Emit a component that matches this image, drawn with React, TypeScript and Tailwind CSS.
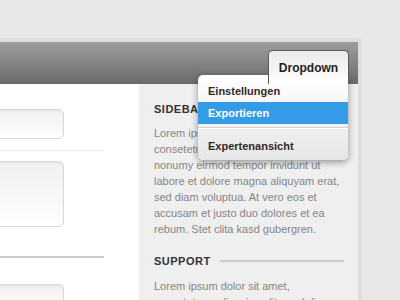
export default function App() {
  const lorem =
    "Lorem ipsum dolor sit amet, consetetur sadipscing elitr, sed diam nonumy eirmod tempor invidunt ut labore et dolore magna aliquyam erat, sed diam voluptua. At vero eos et accusam et justo duo dolores et ea rebum. Stet clita kasd gubergren."

  const inputCls =
    "-ml-3 mr-[40px] shrink-0 rounded-[5px] border border-[#d9d9d9] bg-gradient-to-b from-[#f0f0f0] to-white shadow-[inset_0_1px_2px_rgba(0,0,0,0.05)]"

  return (
    <div className="h-[300px] w-[400px] overflow-hidden bg-[#e8e8e8] pt-[38px] font-['Liberation_Sans',Arial,sans-serif]">
      <div className="w-[362px] rounded-tr-[4px] bg-[#dedede] pr-[4px] pt-[4px]">
        {/* header */}
        <div className="relative flex h-[42px] items-end justify-end bg-gradient-to-b from-[#9d9d9d] to-[#6b6b6b] pr-[9px]">
          <div className="relative z-20 flex h-[34px] w-[81px] justify-center rounded-t-[5px] border border-b-0 border-[#5a5a5a] bg-gradient-to-b from-[#eaeaea] to-white pt-[8px] text-[12px] font-bold text-[#222]">
            Dropdown
          </div>

          {/* menu */}
          <div className="absolute right-[10px] top-[33px] z-10 w-[150px] overflow-hidden rounded-[5px] bg-gradient-to-b from-white to-[#e6e6e6] pt-[6px] pb-[5px] text-[11px] font-bold shadow-[0_2px_7px_rgba(0,0,0,0.4)]">
            <div className="px-[10px] leading-[20px] text-[#332a25]">Einstellungen</div>
            <div className="mt-[1px] bg-[#349be6] px-[10px] leading-[22px] text-white">Exportieren</div>
            <div className="mt-[3px] h-[2px] border-t border-[#d2d2d2] bg-white" />
            <div className="mt-[8px] px-[10px] leading-[18px] text-[#332a25]">Expertenansicht</div>
          </div>
        </div>

        {/* body */}
        <div className="flex">
          <div className="flex h-[220px] w-[139px] shrink-0 flex-col overflow-hidden bg-white pr-[35px] pt-[25px]">
            <div className={`${inputCls} h-[30px]`} />
            <div className="mt-[11px] h-px shrink-0 bg-[#ebebeb]" />
            <div className={`${inputCls} mt-[10px] h-[66px]`} />
            <div className="mt-[29px] h-[2px] shrink-0 bg-[#cbcbcb]" />
            <div className={`${inputCls} mt-[26px] h-[30px]`} />
          </div>

          <div className="h-[220px] flex-1 overflow-hidden bg-[#efefef] pl-[15px] pr-[14px] pt-[18px]">
            <div className="flex items-center gap-[9px]">
              <h3 className="text-[11px] font-bold leading-[14px] tracking-[0.5px] text-[#333]">SIDEBAR</h3>
              <div className="h-[2px] flex-1 bg-[#cacaca]" />
            </div>
            <p className="mt-[9px] text-[11px] leading-[16px] text-[#858585]">{lorem}</p>

            <div className="mt-[17px] flex items-center gap-[9px]">
              <h3 className="text-[11px] font-bold leading-[14px] tracking-[0.5px] text-[#333]">SUPPORT</h3>
              <div className="h-[2px] flex-1 bg-[#cacaca]" />
            </div>
            <p className="mt-[10px] text-[11px] leading-[16px] text-[#858585]">{lorem}</p>
          </div>
        </div>
      </div>
    </div>
  )
}
